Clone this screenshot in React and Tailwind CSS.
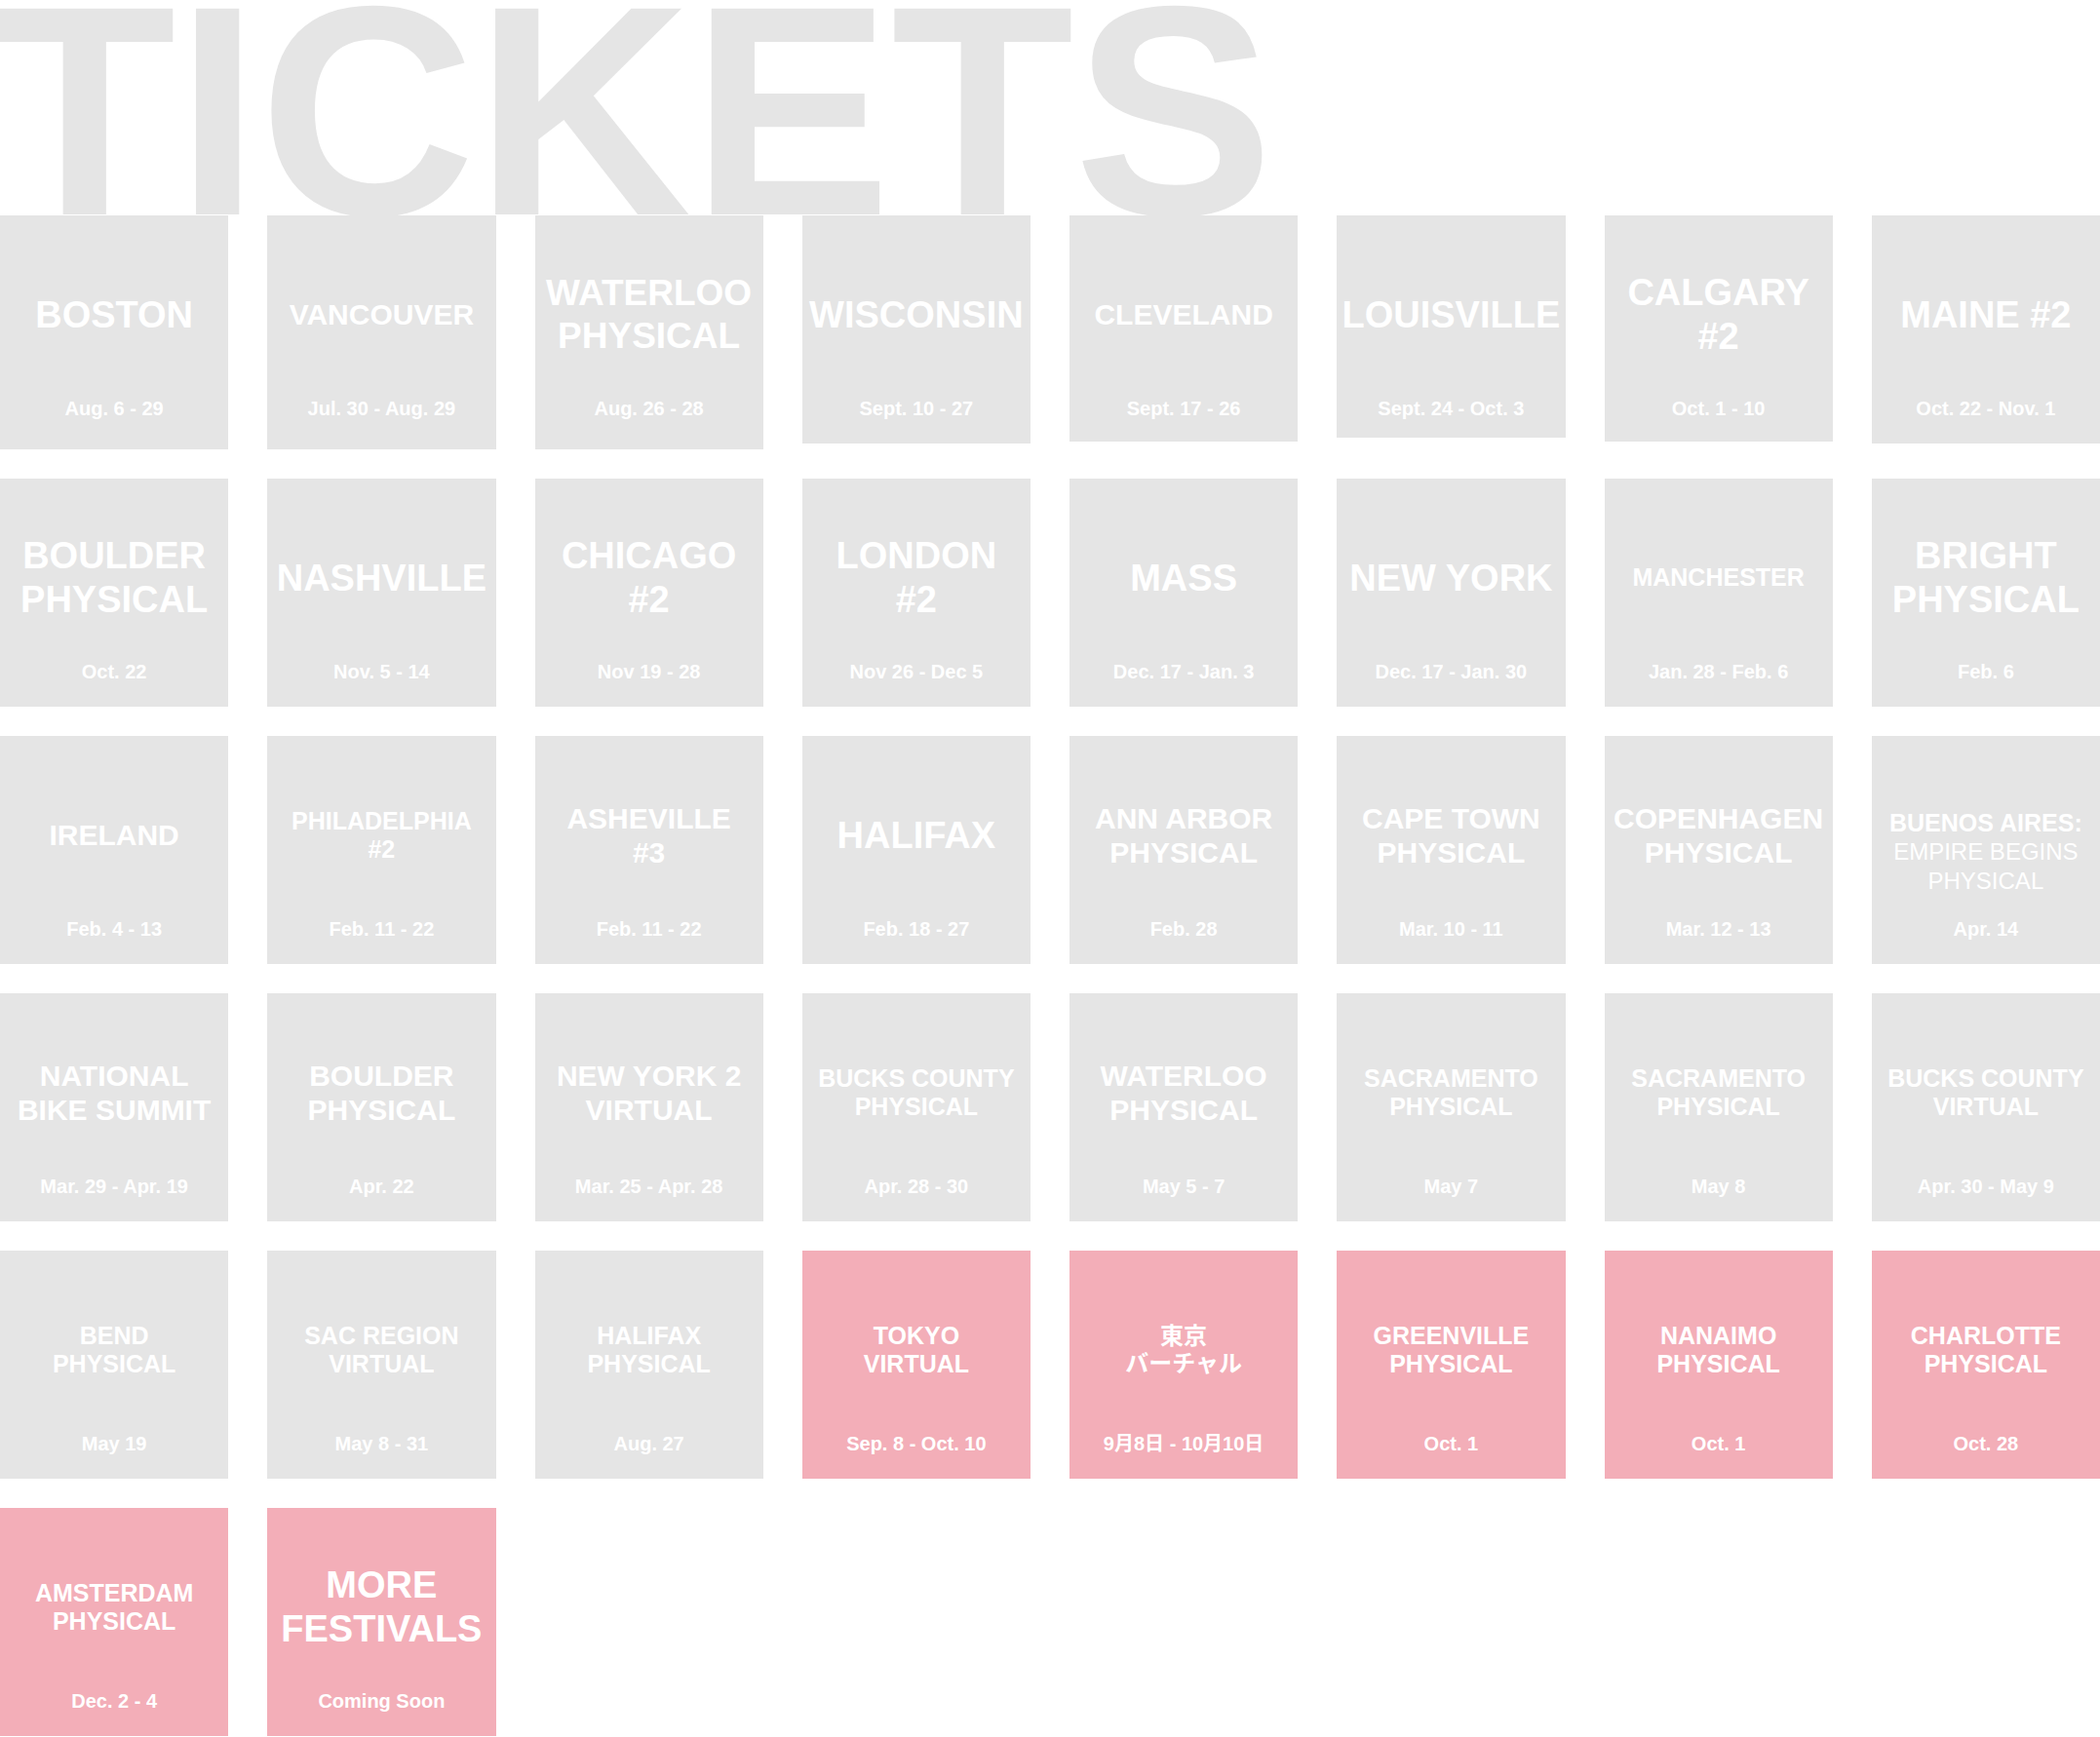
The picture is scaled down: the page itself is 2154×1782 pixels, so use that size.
const GRAY = "bg-[#e5e5e5]";
const PINK = "bg-[#f3aeb8]";

const festivals = [
  // row 1 (tiles have slightly uneven heights)
  { lines: ["BOSTON"], date: "Aug. 6 - 29", size: "text-[38px]", h: "h-[240px]" },
  { lines: ["VANCOUVER"], date: "Jul. 30 - Aug. 29", size: "text-[30px]", h: "h-[240px]" },
  { lines: ["WATERLOO", "PHYSICAL"], date: "Aug. 26 - 28", size: "text-[37px]", h: "h-[240px]" },
  { lines: ["WISCONSIN"], date: "Sept. 10 - 27", size: "text-[38px]", h: "h-[234px]" },
  { lines: ["CLEVELAND"], date: "Sept. 17 - 26", size: "text-[30px]", h: "h-[232px]" },
  { lines: ["LOUISVILLE"], date: "Sept. 24 - Oct. 3", size: "text-[38px]", h: "h-[228px]" },
  { lines: ["CALGARY", "#2"], date: "Oct. 1 - 10", size: "text-[38px]", h: "h-[232px]" },
  { lines: ["MAINE #2"], date: "Oct. 22 - Nov. 1", size: "text-[38px]", h: "h-[234px]" },

  // row 2
  { lines: ["BOULDER", "PHYSICAL"], date: "Oct. 22", size: "text-[38px]" },
  { lines: ["NASHVILLE"], date: "Nov. 5 - 14", size: "text-[38px]" },
  { lines: ["CHICAGO", "#2"], date: "Nov 19 - 28", size: "text-[38px]" },
  { lines: ["LONDON", "#2"], date: "Nov 26 - Dec 5", size: "text-[38px]" },
  { lines: ["MASS"], date: "Dec. 17 - Jan. 3", size: "text-[38px]" },
  { lines: ["NEW YORK"], date: "Dec. 17 - Jan. 30", size: "text-[38px]" },
  { lines: ["MANCHESTER"], date: "Jan. 28 - Feb. 6", size: "text-[25px]" },
  { lines: ["BRIGHT", "PHYSICAL"], date: "Feb. 6", size: "text-[38px]" },

  // row 3
  { lines: ["IRELAND"], date: "Feb. 4 - 13", size: "text-[30px]" },
  { lines: ["PHILADELPHIA", "#2"], date: "Feb. 11 - 22", size: "text-[25px]" },
  { lines: ["ASHEVILLE", "#3"], date: "Feb. 11 - 22", size: "text-[30px]" },
  { lines: ["HALIFAX"], date: "Feb. 18 - 27", size: "text-[38px]" },
  { lines: ["ANN ARBOR", "PHYSICAL"], date: "Feb. 28", size: "text-[30px]" },
  { lines: ["CAPE TOWN", "PHYSICAL"], date: "Mar. 10 - 11", size: "text-[30px]" },
  { lines: ["COPENHAGEN", "PHYSICAL"], date: "Mar. 12 - 13", size: "text-[30px]" },
  { buenos: true, date: "Apr. 14" },

  // row 4
  { lines: ["NATIONAL", "BIKE SUMMIT"], date: "Mar. 29 - Apr. 19", size: "text-[30px]" },
  { lines: ["BOULDER", "PHYSICAL"], date: "Apr. 22", size: "text-[30px]" },
  { lines: ["NEW YORK 2", "VIRTUAL"], date: "Mar. 25 - Apr. 28", size: "text-[30px]" },
  { lines: ["BUCKS COUNTY", "PHYSICAL"], date: "Apr. 28 - 30", size: "text-[25px]" },
  { lines: ["WATERLOO", "PHYSICAL"], date: "May 5 - 7", size: "text-[30px]" },
  { lines: ["SACRAMENTO", "PHYSICAL"], date: "May 7", size: "text-[25px]" },
  { lines: ["SACRAMENTO", "PHYSICAL"], date: "May 8", size: "text-[25px]" },
  { lines: ["BUCKS COUNTY", "VIRTUAL"], date: "Apr. 30 - May 9", size: "text-[25px]" },

  // row 5
  { lines: ["BEND", "PHYSICAL"], date: "May 19", size: "text-[25px]" },
  { lines: ["SAC REGION", "VIRTUAL"], date: "May 8 - 31", size: "text-[25px]" },
  { lines: ["HALIFAX", "PHYSICAL"], date: "Aug. 27", size: "text-[25px]" },
  { lines: ["TOKYO", "VIRTUAL"], date: "Sep. 8 - Oct. 10", size: "text-[25px]", pink: true },
  { lines: ["東京", "バーチャル"], date: "9月8日 - 10月10日", size: "text-[24px]", pink: true },
  { lines: ["GREENVILLE", "PHYSICAL"], date: "Oct. 1", size: "text-[25px]", pink: true },
  { lines: ["NANAIMO", "PHYSICAL"], date: "Oct. 1", size: "text-[25px]", pink: true },
  { lines: ["CHARLOTTE", "PHYSICAL"], date: "Oct. 28", size: "text-[25px]", pink: true },

  // row 6
  { lines: ["AMSTERDAM", "PHYSICAL"], date: "Dec. 2 - 4", size: "text-[25px]", pink: true },
  { lines: ["MORE", "FESTIVALS"], date: "Coming Soon", size: "text-[38px]", pink: true },
];

function Tile({ f }) {
  return (
    <div
      className={`${f.pink ? PINK : GRAY} ${f.h || "h-[234px]"} flex flex-col items-center text-white`}
    >
      {/* TITLE */}
      <div className="mt-[20px] h-[164px] w-full flex items-center justify-center text-center">
        {f.buenos ? (
          <div className="mt-[34px] leading-[30px]">
            <div className="text-[25px] font-bold">BUENOS AIRES:</div>
            <div className="text-[24px] font-normal">EMPIRE BEGINS</div>
            <div className="text-[24px] font-normal">PHYSICAL</div>
          </div>
        ) : (
          <div className={`${f.size} font-bold leading-[1.18] whitespace-nowrap`}>
            {f.lines.map((l, i) => (
              <div key={i}>{l}</div>
            ))}
          </div>
        )}
      </div>

      {/* DATE */}
      <div className="h-[28px] leading-[28px] text-[20px] font-bold whitespace-nowrap">
        {f.date}
      </div>
    </div>
  );
}

export default function App() {
  return (
    <div
      className="w-full bg-white"
      style={{ fontFamily: '"Liberation Sans", "Noto Sans CJK JP", Arial, sans-serif' }}
    >
      <h1 className="h-[221px] ml-[-7px] text-[307px] leading-[227px] font-bold text-[#e5e5e5] whitespace-nowrap">
        TICKETS
      </h1>

      <div className="relative grid grid-cols-8 gap-x-[40px] gap-y-[30px] items-start">
        {festivals.map((f, i) => (
          <Tile key={i} f={f} />
        ))}
      </div>
    </div>
  );
}
